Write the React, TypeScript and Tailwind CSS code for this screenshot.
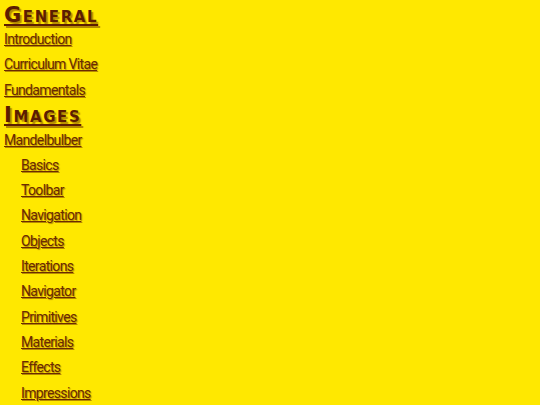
const general = ["Introduction", "Curriculum Vitae", "Fundamentals"];
const subs = ["Basics", "Toolbar", "Navigation", "Objects", "Iterations", "Navigator", "Primitives", "Materials", "Effects", "Impressions"];

const link = "block h-[25.3px] leading-[25.8px] text-[14px] tracking-[-0.65px] text-[#6b2a00] underline [font-family:Roboto,sans-serif] [text-shadow:1px_1px_1px_#b58a00] whitespace-nowrap";
const head = "block text-[#5c1d00] underline font-bold [font-variant:small-caps] [font-family:'DejaVu_Sans',sans-serif] tracking-[1.6px] [text-shadow:2px_2px_1px_#b58a00] whitespace-nowrap";

export default function App() {
  return (
    <div className="h-[405px] w-[540px] overflow-hidden bg-[#ffe800] pl-1">
      <a className={`${head} h-[27px] text-[21px] leading-[30px]`}>General</a>
      {general.map((t) => (
        <a key={t} className={link}>{t}</a>
      ))}
      <a className={`${head} h-[24.7px] text-[21px] leading-[25px]`}>Images</a>
      <a className={link}>Mandelbulber</a>
      <div className="pl-[17px]">
        {subs.map((t) => (
          <a key={t} className={link}>{t}</a>
        ))}
      </div>
    </div>
  );
}
